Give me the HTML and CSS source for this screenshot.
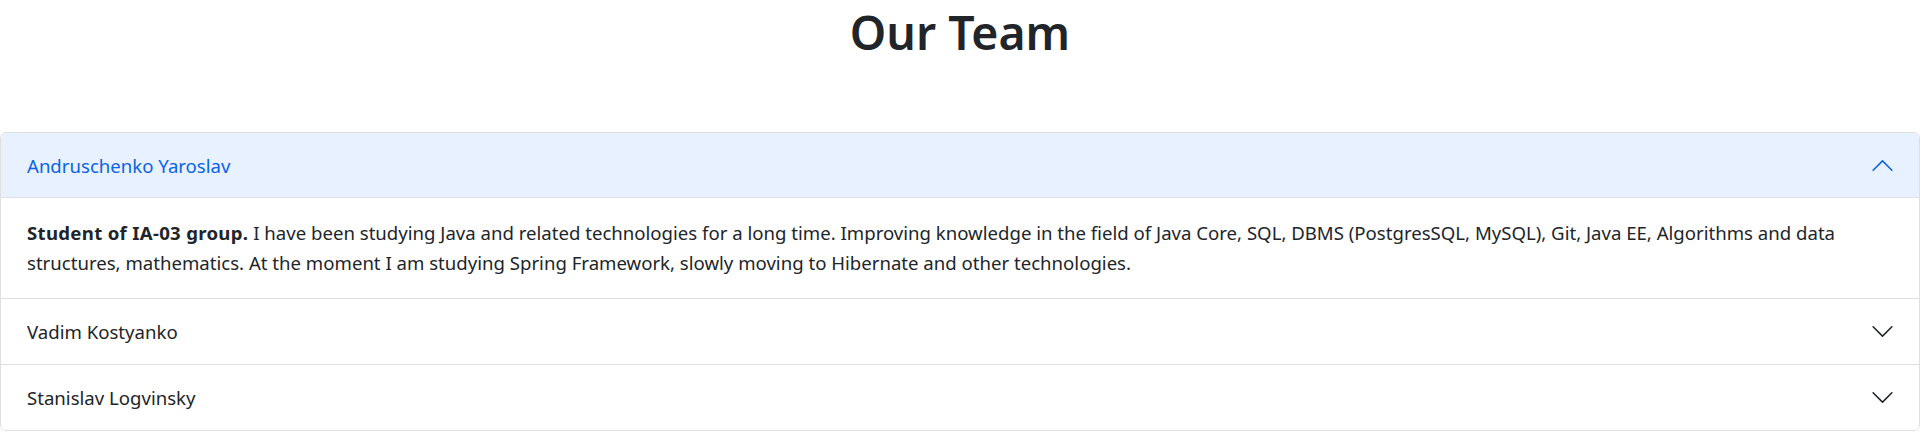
FILE: index.html
```html
<!DOCTYPE html>
<html lang="en">
<head>
<meta charset="utf-8">
<title>Our Team</title>
<link rel="stylesheet" href="styles.css">
</head>
<body>
<main class="page">
  <h1 class="title">Our Team</h1>
  <div class="accordion">
    <div class="acc-item">
      <button class="acc-btn active" type="button">
        <span class="acc-name">Andruschenko Yaroslav</span>
        <svg class="chev up" viewBox="0 0 16 16" width="25" height="25"><path fill="currentColor" fill-rule="evenodd" d="M1.646 4.646a.5.5 0 0 1 .708 0L8 10.293l5.646-5.647a.5.5 0 0 1 .708.708l-6 6a.5.5 0 0 1-.708 0l-6-6a.5.5 0 0 1 0-.708z"/></svg>
      </button>
      <div class="acc-body">
        <p class="acc-text"><strong>Student of IA-03 group.</strong> I have been studying Java and related technologies for a long time. Improving knowledge in the field of Java Core, SQL, DBMS (PostgresSQL, MySQL), Git, Java EE, Algorithms and data structures, mathematics. At the moment I am studying Spring Framework, slowly moving to Hibernate and other technologies.</p>
      </div>
    </div>
    <div class="acc-item">
      <button class="acc-btn" type="button">
        <span class="acc-name">Vadim Kostyanko</span>
        <svg class="chev" viewBox="0 0 16 16" width="25" height="25"><path fill="currentColor" fill-rule="evenodd" d="M1.646 4.646a.5.5 0 0 1 .708 0L8 10.293l5.646-5.647a.5.5 0 0 1 .708.708l-6 6a.5.5 0 0 1-.708 0l-6-6a.5.5 0 0 1 0-.708z"/></svg>
      </button>
    </div>
    <div class="acc-item">
      <button class="acc-btn" type="button">
        <span class="acc-name">Stanislav Logvinsky</span>
        <svg class="chev" viewBox="0 0 16 16" width="25" height="25"><path fill="currentColor" fill-rule="evenodd" d="M1.646 4.646a.5.5 0 0 1 .708 0L8 10.293l5.646-5.647a.5.5 0 0 1 .708.708l-6 6a.5.5 0 0 1-.708 0l-6-6a.5.5 0 0 1 0-.708z"/></svg>
      </button>
    </div>
  </div>
</main>
</body>
</html>
```
FILE: styles.css
```css
* { box-sizing: border-box; }
html, body { margin: 0; padding: 0; background: #fff; }
body {
  font-family: "Noto Sans", "Open Sans", sans-serif;
  font-size: 18.6px;
  line-height: 30px;
  color: #212529;
}
.title {
  margin: 0;
  padding: 0;
  height: 132px;
  text-align: center;
  font-size: 46.4px;
  line-height: 64px;
  font-weight: 600;
  color: #212529;
}
.accordion {
  border: 1px solid #dfdfdf;
  border-radius: 6px;
  overflow: hidden;
}
.acc-item + .acc-item { border-top: 1px solid #dfdfdf; }
.acc-btn {
  display: flex;
  align-items: center;
  justify-content: space-between;
  width: 100%;
  height: 65px;
  padding: 0 24px 0 26px;
  margin: 0;
  border: 0;
  background: #fff;
  font: inherit;
  line-height: 30px;
  color: #212529;
  text-align: left;
  cursor: pointer;
}
.acc-btn.active {
  background: #e7f1ff;
  color: #0c63e4;
  box-shadow: inset 0 -1px 0 #dfdfdf;
}
.chev { flex-shrink: 0; display: block; }
.chev.up { transform: rotate(180deg); }
.acc-body {
  padding: 20px 25px 20px 26px;
  height: 100px;
}
.acc-text { margin: 0; }
.acc-text strong { font-weight: 700; letter-spacing: 0.3px; }
```
